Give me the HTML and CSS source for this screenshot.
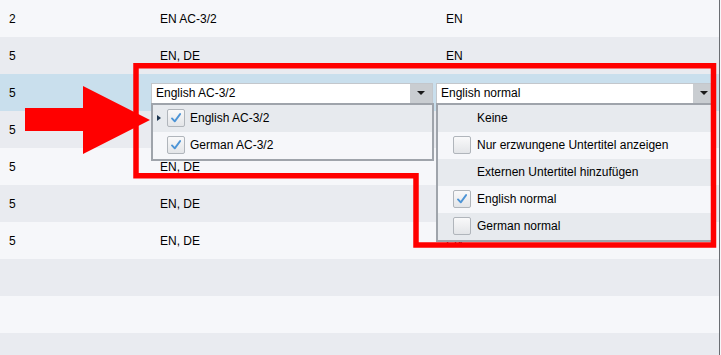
FILE: index.html
```html
<!DOCTYPE html>
<html>
  <head>
    <meta charset="utf-8" />
    <title>Audio / Untertitel</title>
    <link rel="stylesheet" href="styles.css">
  </head>
  <body>
    <div class="grid">
      <div class="row odd">
        <div class="cell c1">2</div><div class="cell c2">EN AC-3/2</div><div class="cell c3">EN</div>
      </div>
      <div class="row even">
        <div class="cell c1">5</div><div class="cell c2">EN, DE</div><div class="cell c3">EN</div>
      </div>

      <!-- row in edit mode: both combos open -->
      <div class="row selected">
        <div class="cell c1">5</div>
        <div class="combo audio">
          <span class="value">English AC-3/2</span>
          <span class="drop"><i></i></span>
          <div class="list">
            <div class="item dark">
              <span class="ptr"><i></i></span>
              <span class="check on"><svg viewBox="0 0 18 18"><path d="M4.5 9.5 L7.6 12.8 L13.6 4.6"/></svg></span>
              English AC-3/2
            </div>
            <div class="item light">
              <span class="ptr"></span>
              <span class="check on"><svg viewBox="0 0 18 18"><path d="M4.5 9.5 L7.6 12.8 L13.6 4.6"/></svg></span>
              German AC-3/2
            </div>
          </div>
        </div>
        <div class="combo subs">
          <span class="value">English normal</span>
          <span class="drop"><i></i></span>
          <div class="list">
            <div class="item dark"><span class="ptr"></span><span class="nocheck"></span>Keine</div>
            <div class="item light"><span class="ptr"></span><span class="check"></span>Nur erzwungene Untertitel anzeigen</div>
            <div class="item dark"><span class="ptr"></span><span class="nocheck"></span>Externen Untertitel hinzufügen</div>
            <div class="item light">
              <span class="ptr"></span>
              <span class="check on"><svg viewBox="0 0 18 18"><path d="M4.5 9.5 L7.6 12.8 L13.6 4.6"/></svg></span>
              English normal
            </div>
            <div class="item dark"><span class="ptr"></span><span class="check"></span>German normal</div>
          </div>
        </div>
      </div>

      <div class="row even">
        <div class="cell c1">5</div><div class="cell c2">EN, DE</div><div class="cell c3">EN</div>
      </div>
      <div class="row odd">
        <div class="cell c1">5</div><div class="cell c2">EN, DE</div><div class="cell c3">EN</div>
      </div>
      <div class="row even">
        <div class="cell c1">5</div><div class="cell c2">EN, DE</div><div class="cell c3">EN</div>
      </div>
      <div class="row odd">
        <div class="cell c1">5</div><div class="cell c2">EN, DE</div><div class="cell c3">EN</div>
      </div>
      <div class="row even"></div>
      <div class="row odd"></div>
      <div class="row even"></div>
    </div>

    <!-- annotation drawn over the screenshot -->
    <svg class="markup" width="721" height="355" viewBox="0 0 721 355">
      <polygon class="arrow" points="25,108 83,108 83,86 150,120 83,154 83,131 25,131"/>
      <path class="frame" d="M136 65.8 H713.5 V245 H416 V175.8 H136 Z"/>
    </svg>
  </body>
</html>
```

FILE: styles.css
```css
html, body {
  margin: 0;
  height: 100%;
}
body {
  background-color: #f6f7fa;
  color: black;
  font-family: "Liberation Sans", Arial, sans-serif;
  font-size: 12px;
  height: 355px;
  overflow: hidden;
  position: relative;
  width: 721px;
}
.grid {
  border-right: 1px solid #6a6d72;
  box-sizing: border-box;
  width: 720px;
}
.row {
  align-items: center;
  display: flex;
  height: 37px;
}
.odd {
  background-color: #f6f7fa;
}
.even {
  background-color: #e9ebf0;
}
.selected {
  background-color: #c9dfed;
}
.cell {
  white-space: nowrap;
}
.c1 {
  box-sizing: border-box;
  padding-left: 9px;
  width: 151px;
}
.c2 {
  padding-left: 9px;
  width: 277px;
}
.c3 {
  padding-left: 9px;
}

/* combo boxes */
.combo {
  background-color: white;
  border: 1px solid #c3c7cc;
  box-sizing: border-box;
  display: flex;
  height: 21px;
  margin-top: 1px;
  position: relative;
}
.combo.audio {
  width: 282px;
}
.combo.subs {
  margin-left: 3px;
  width: 280px;
}
.combo .value {
  align-self: center;
  flex-grow: 1;
  padding-left: 4px;
}
.drop {
  align-items: center;
  background-color: #c9cdd1;
  display: flex;
  justify-content: center;
  width: 22px;
}
.drop i {
  border-left: 4px solid transparent;
  border-right: 4px solid transparent;
  border-top: 4px solid #1a1a1a;
  height: 0;
  width: 0;
}

/* open lists */
.list {
  background-color: #f6f7fa;
  border: 2px solid #9fa4ab;
  box-sizing: border-box;
  left: -1px;
  position: absolute;
  top: 19px;
  z-index: 2;
}
.audio .list {
  width: 283px;
}
.subs .list {
  width: 278px;
}
.item {
  align-items: center;
  display: flex;
  height: 27px;
  padding-left: 4px;
  white-space: nowrap;
}
.subs .item {
  padding-left: 5px;
}
.item.dark {
  background-color: #e7eaee;
}
.item.light {
  background-color: #f6f7fa;
}
.ptr {
  display: flex;
  flex-shrink: 0;
  width: 10px;
}
.ptr i {
  border-bottom: 3.5px solid transparent;
  border-left: 4px solid #1d3550;
  border-top: 3.5px solid transparent;
  height: 0;
  width: 0;
}
.check, .nocheck {
  flex-shrink: 0;
  height: 18px;
  margin-right: 5px;
  width: 18px;
}
.subs .check, .subs .nocheck {
  margin-right: 6px;
}
.check {
  background: linear-gradient(#f9f9fa, #e3e5e8);
  border: 1px solid #b0b5bb;
  border-radius: 2px;
  box-sizing: border-box;
}
.check svg {
  display: block;
  height: 16px;
  width: 16px;
}
.check path {
  fill: none;
  stroke: #4d94d6;
  stroke-linecap: round;
  stroke-linejoin: round;
  stroke-width: 2.1;
}

/* red annotation */
.markup {
  left: 0;
  pointer-events: none;
  position: absolute;
  top: 0;
  z-index: 5;
}
.arrow {
  fill: #ff0000;
}
.frame {
  fill: none;
  stroke: #ff0000;
  stroke-width: 5.5;
}
```
